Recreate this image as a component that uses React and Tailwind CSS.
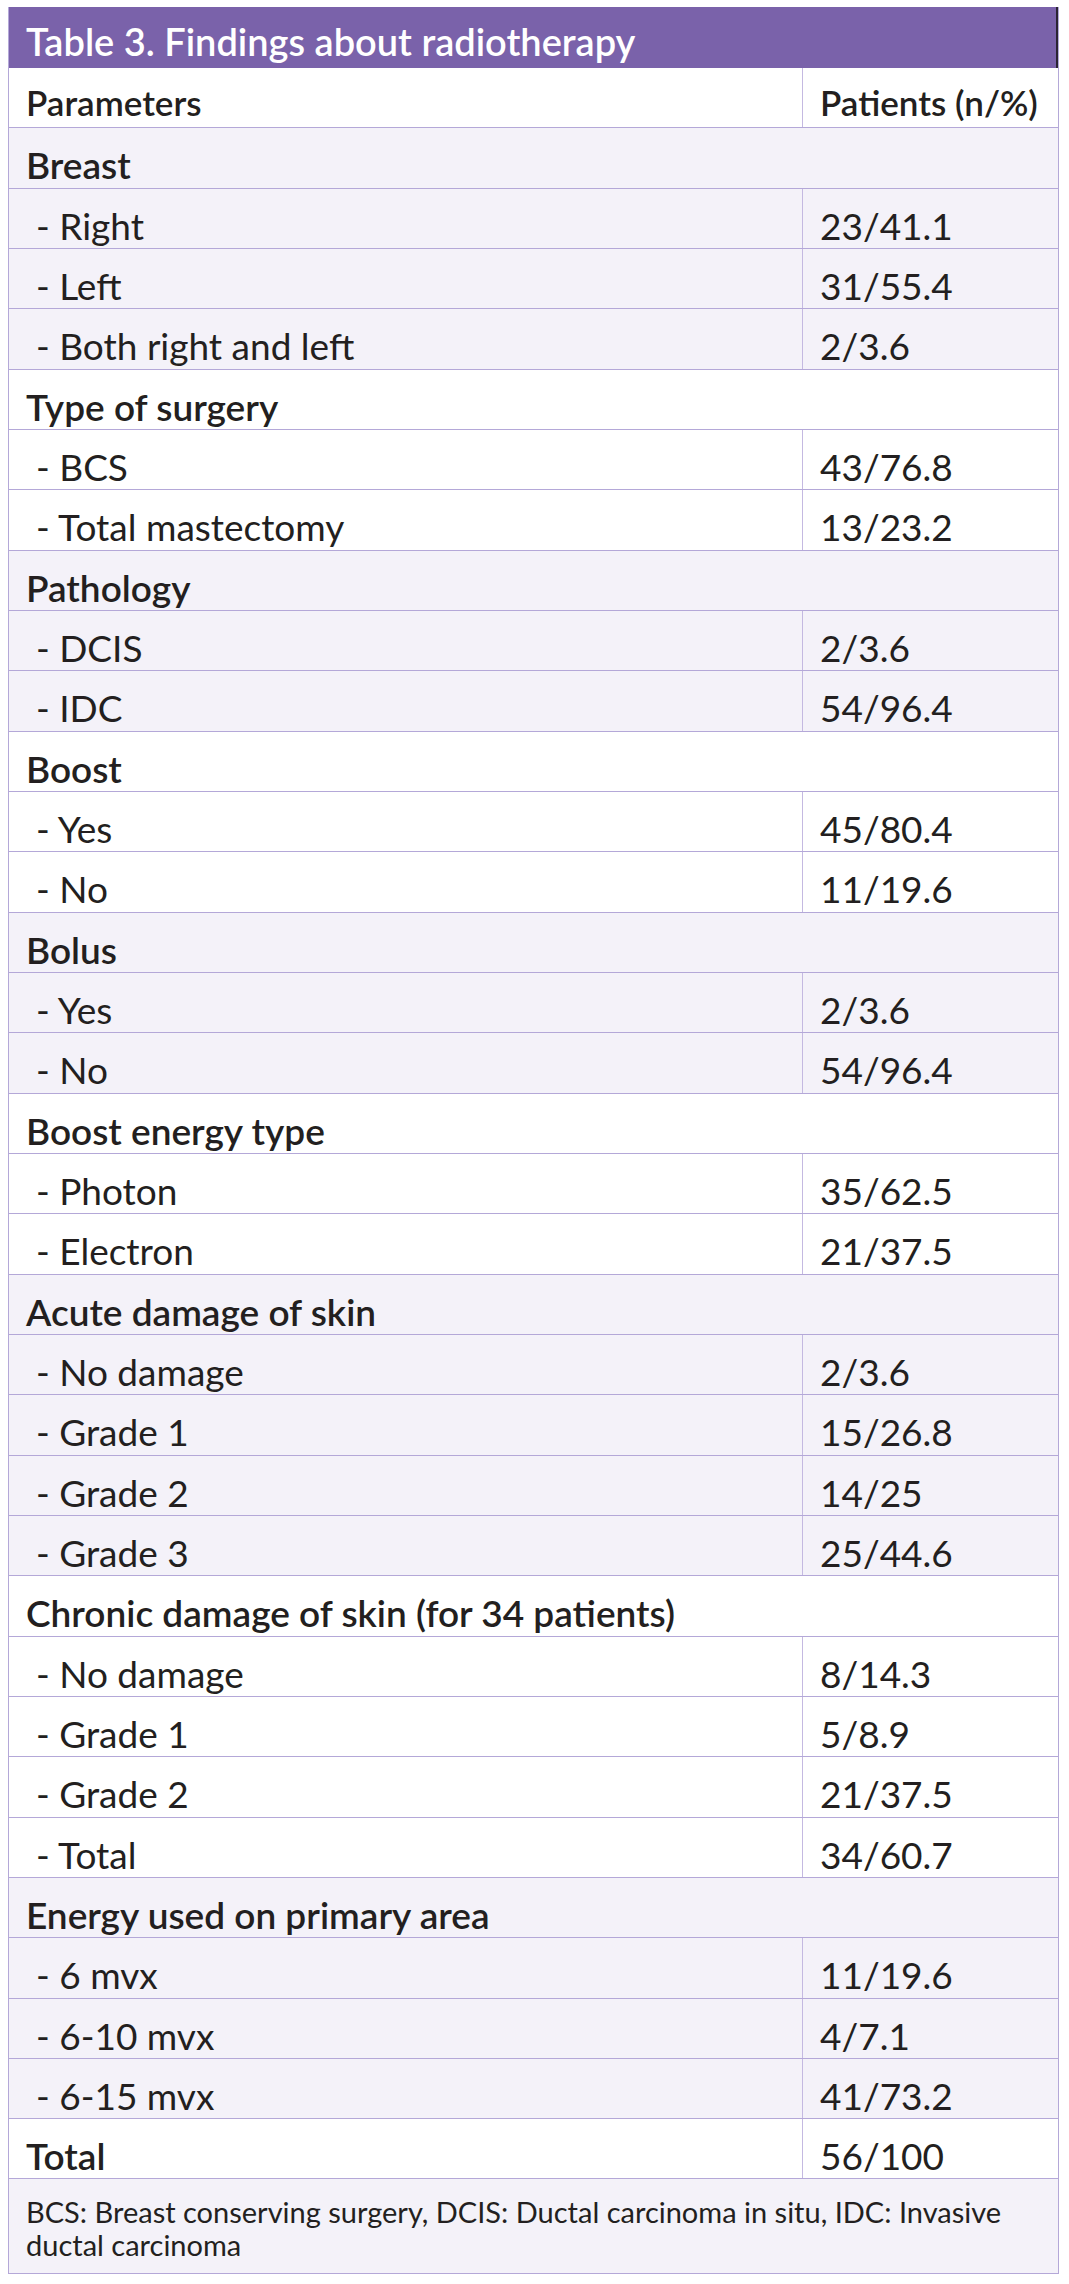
const rows = [
  { label: "Breast", group: true, shade: true },
  { label: "- Right", value: "23/41.1", shade: true },
  { label: "- Left", value: "31/55.4", shade: true },
  { label: "- Both right and left", value: "2/3.6", shade: true },
  { label: "Type of surgery", group: true },
  { label: "- BCS", value: "43/76.8" },
  { label: "- Total mastectomy", value: "13/23.2" },
  { label: "Pathology", group: true, shade: true },
  { label: "- DCIS", value: "2/3.6", shade: true },
  { label: "- IDC", value: "54/96.4", shade: true },
  { label: "Boost", group: true },
  { label: "- Yes", value: "45/80.4" },
  { label: "- No", value: "11/19.6" },
  { label: "Bolus", group: true, shade: true },
  { label: "- Yes", value: "2/3.6", shade: true },
  { label: "- No", value: "54/96.4", shade: true },
  { label: "Boost energy type", group: true },
  { label: "- Photon", value: "35/62.5" },
  { label: "- Electron", value: "21/37.5" },
  { label: "Acute damage of skin", group: true, shade: true },
  { label: "- No damage", value: "2/3.6", shade: true },
  { label: "- Grade 1", value: "15/26.8", shade: true },
  { label: "- Grade 2", value: "14/25", shade: true },
  { label: "- Grade 3", value: "25/44.6", shade: true },
  { label: "Chronic damage of skin (for 34 patients)", group: true },
  { label: "- No damage", value: "8/14.3" },
  { label: "- Grade 1", value: "5/8.9" },
  { label: "- Grade 2", value: "21/37.5" },
  { label: "- Total", value: "34/60.7" },
  { label: "Energy used on primary area", group: true, shade: true },
  { label: "- 6 mvx", value: "11/19.6", shade: true },
  { label: "- 6-10 mvx", value: "4/7.1", shade: true },
  { label: "- 6-15 mvx", value: "41/73.2", shade: true },
];

function Row({ row }) {
  const bg = row.shade ? "bg-[#f4f2f9]" : "bg-white";
  if (row.group) {
    return (
      <div className={`flex h-[60.34px] items-center border-b border-[#b4a8d8] ${bg}`}>
        <span className="pl-[17px] pt-[14px] font-semibold">{row.label}</span>
      </div>
    );
  }
  return (
    <div className={`flex h-[60.34px] border-b border-[#b4a8d8] ${bg}`}>
      <div className="flex w-[794px] items-center border-r border-[#c4b9e1] pl-[27px] pt-[14px]">
        {row.label.replace("- ", "-\u00a0")}
      </div>
      <div className="flex flex-1 items-center pl-[17px] pt-[14px]">{row.value}</div>
    </div>
  );
}

export default function App() {
  return (
    <div className="min-h-screen bg-white pl-[8px] pt-[7px] font-['Lato',sans-serif] text-[37px] leading-none text-[#231f20]">
      <div className="w-[1051px] border-x border-[#b4a8d8]">
        {/* Title bar */}
        <div className="flex h-[61px] items-center border-r-2 border-[#2a2433] bg-[#7a62aa] pl-[17px] pt-[6px] text-[38px] font-semibold text-white">
          Table 3. Findings about radiotherapy
        </div>

        {/* Column heads */}
        <div className="flex h-[60.34px] border-b border-[#b4a8d8] bg-white text-[35px] font-semibold">
          <div className="flex w-[794px] items-center border-r border-[#c4b9e1] pl-[17px] pt-[10px]">
            Parameters
          </div>
          <div className="flex flex-1 items-center pl-[17px] pt-[10px]">Patients (n/%)</div>
        </div>

        {rows.map((row, i) => (
          <Row key={i} row={row} />
        ))}

        {/* Total */}
        <div className="flex h-[60.34px] border-b border-[#b4a8d8] bg-white">
          <div className="flex w-[794px] items-center border-r border-[#c4b9e1] pl-[17px] pt-[14px] font-semibold">
            Total
          </div>
          <div className="flex flex-1 items-center pl-[17px] pt-[14px]">56/100</div>
        </div>

        {/* Footnote */}
        <div className="border-b border-[#b4a8d8] bg-[#f4f2f9] px-[17px] pb-[12px] pt-[16px] text-[29px] leading-[33px]">
          BCS: Breast conserving surgery, DCIS: Ductal carcinoma in situ, IDC: Invasive ductal carcinoma
        </div>
      </div>
    </div>
  );
}
